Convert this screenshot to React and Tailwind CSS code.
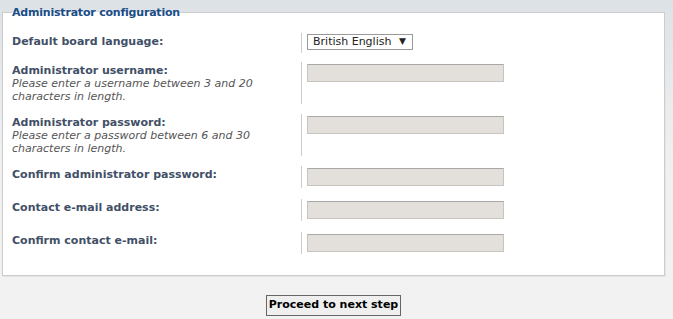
import React from 'react';

const rows = [
  { label: 'Default board language:', type: 'select', top: 'mt-[20px]', h: 'min-h-[20px]' },
  { label: 'Administrator username:', hint: 'Please enter a username between 3 and 20 characters in length.', top: 'mt-[9px]', h: 'min-h-[42px]' },
  { label: 'Administrator password:', hint: 'Please enter a password between 6 and 30 characters in length.', top: 'mt-[10px]', h: 'min-h-[42px]' },
  { label: 'Confirm administrator password:', top: 'mt-[10px]', h: 'min-h-[22px]' },
  { label: 'Contact e-mail address:', top: 'mt-[11px]', h: 'min-h-[22px]' },
  { label: 'Confirm contact e-mail:', top: 'mt-[11px]', h: 'min-h-[22px]' },
];

function Field({ row }) {
  return (
    <div className={`flex ${row.top}`}>
      <div className="w-[289px] shrink-0 pt-[2px] pr-[8px] text-[11px] leading-[13px]">
        <div className="font-bold text-[#425067]">{row.label}</div>
        {row.hint && <div className="italic text-[#555555]">{row.hint}</div>}
      </div>
      <div className={`border-l border-[#cccccc] pl-[5px] ${row.h}`}>
        {row.type === 'select' ? (
          <div className="mt-[1px] flex h-[16px] w-[106px] items-center justify-between border border-[#999999] bg-white pl-[5px] pr-[6px] text-[11px] text-[#222222]">
            <span>British English</span>
            <span className="text-[9px]">▼</span>
          </div>
        ) : (
          <div className="mt-[2px] h-[18px] w-[197px] border border-[#c8c5c0] border-t-[#a9a9a9] bg-[#e3e0db]" />
        )}
      </div>
    </div>
  );
}

export default function App() {
  return (
    <div
      className="min-h-[319px] w-[673px] bg-gradient-to-b from-[#dde2e7] via-[#f0f0f0] to-[#f2f2f2] pt-[5px]"
      style={{ fontFamily: '"DejaVu Sans", Verdana, sans-serif' }}
    >
      <fieldset className="ml-[2px] w-[663px] border border-[#cccccc] bg-white px-[9px] pb-[21px] shadow-[1px_1px_0_#e6e6e6]">
        <legend className="px-0 text-[11px] font-bold leading-[15px] tracking-[-0.2px] text-[#1a4d86]">Administrator configuration</legend>
        <div className="-mt-[7px]">
          {rows.map((r, i) => (
            <Field key={i} row={r} />
          ))}
        </div>
      </fieldset>
      <div className="ml-[2px] w-[663px] pt-[19px] flex justify-center">
        <button className="h-[21px] w-[135px] border border-[#666666] bg-[#efefef] text-[11px] font-bold text-black">
          Proceed to next step
        </button>
      </div>
    </div>
  );
}
